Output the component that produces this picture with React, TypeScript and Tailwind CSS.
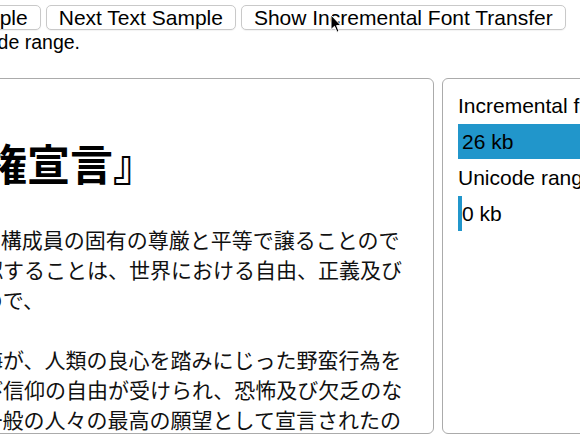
import React from "react";

const bars = [
  { label: "Incremental font transfer", value: "26 kb", width: 420 },
  { label: "Unicode range", value: "0 kb", width: 4 },
];

const jp = "font-['Noto_Sans_CJK_JP','Noto_Sans',sans-serif]";

export default function App() {
  return (
    <div className="relative w-[580px] h-[435px] overflow-hidden bg-white text-black font-['Liberation_Sans',Arial,sans-serif]">
      <div className="ml-[-192px] w-[1000px] pt-[5px]">
        <div className="flex gap-[5px] ml-[4px]">
          {["Previous Text Sample", "Next Text Sample", "Show Incremental Font Transfer"].map((t) => (
            <button
              key={t}
              className="px-[12px] text-[21px] leading-[23px] border border-[#c9c9c9] rounded-[5px] bg-white whitespace-nowrap shadow-[0_1px_1px_rgba(0,0,0,0.05)]"
            >
              {t}
            </button>
          ))}
        </div>
        <div className="flex justify-end w-[272px] whitespace-nowrap text-[19.5px] leading-[24px]">
          <span className="shrink-0">Fonts are split into subsets by Unicode range.</span>
        </div>
        <div className="flex gap-[8px] mt-[24px]">
          <div className="w-[626px] h-[356px] shrink-0 border border-[#ababab] rounded-[6px] overflow-hidden pl-[5px]">
            <h1 className={`${jp} pt-[62px] ml-[-2px] text-[43px] leading-[43px] font-bold whitespace-nowrap`}>
              『世界人権宣言』
            </h1>
            <div className={`${jp} mt-[40px] w-[590px] text-[21px] leading-[30px] text-[#111]`}>
              <p>
                人類社会のすべての構成員の固有の尊厳と平等で譲ることのできない権利とを承認することは、世界における自由、正義及び平和の基礎であるので、
              </p>
              <p className="mt-[30px]">
                人権の無視及び軽侮が、人類の良心を踏みにじった野蛮行為をもたらし、言論及び信仰の自由が受けられ、恐怖及び欠乏のない世界の到来が、一般の人々の最高の願望として宣言されたので、
              </p>
            </div>
          </div>
          <div className="w-[320px] h-[356px] shrink-0 border border-[#ababab] rounded-[6px] overflow-hidden pl-[15px] pt-[15px]">
            {bars.map((b, i) => (
              <div key={b.label} className={i > 0 ? "mt-[7px]" : ""}>
                <div className="text-[21px] leading-[24px] whitespace-nowrap">{b.label}</div>
                <div className="relative mt-[6px] h-[35px] flex items-center">
                  <div className="absolute left-0 top-0 bottom-0 bg-[#2196cb]" style={{ width: b.width }} />
                  <span className="relative pl-[4px] text-[21px] leading-[24px]">{b.value}</span>
                </div>
              </div>
            ))}
          </div>
        </div>
      </div>
      <svg className="absolute left-[330px] top-[14px]" width="12" height="20" viewBox="0 0 12 20">
        <path d="M1 1 L1 15.5 L4.5 12.3 L7 18.2 L9 17.3 L6.6 11.6 L11 11.6 Z" fill="#000" stroke="#fff" strokeWidth="1" strokeLinejoin="round" />
      </svg>
    </div>
  );
}
